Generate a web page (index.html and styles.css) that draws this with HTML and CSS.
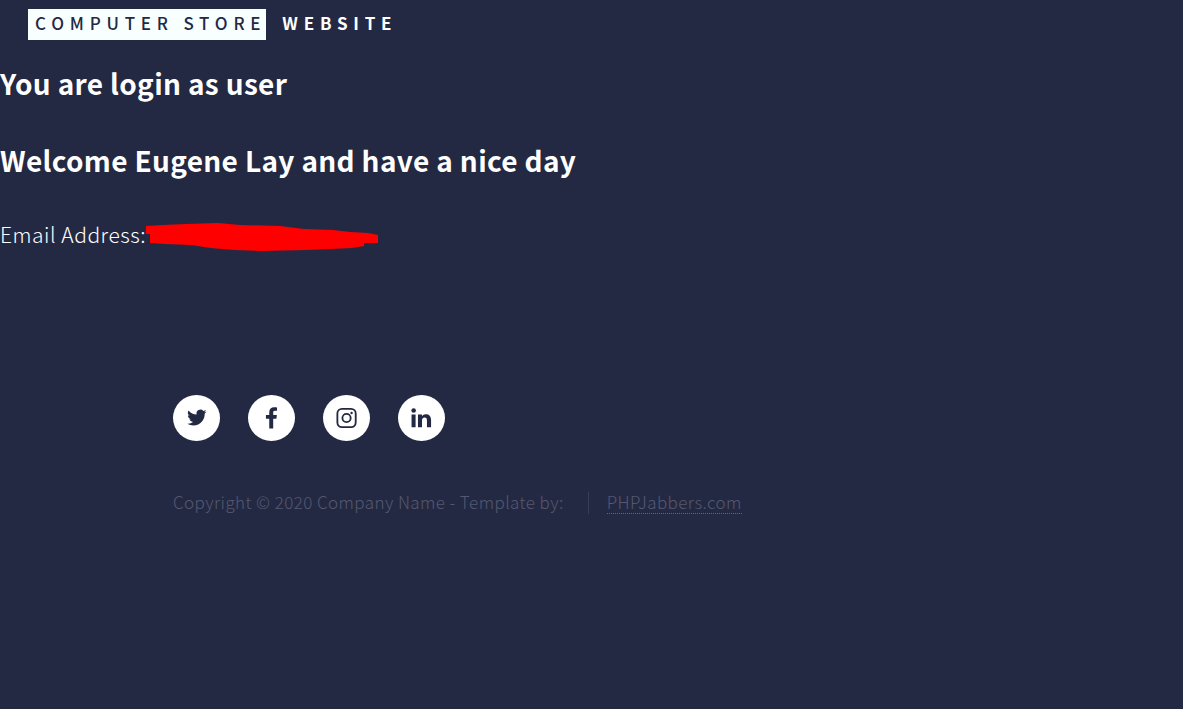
FILE: index.html
```
<!DOCTYPE html>
<html lang="en">
<head>
<meta charset="utf-8">
<meta name="viewport" content="width=device-width, initial-scale=1">
<title>Computer Store Website</title>
<link rel="stylesheet" href="styles.css">
</head>
<body>
<header class="header">
  <a class="logo" href="#"><strong class="logo-mark">Computer Store</strong><span class="logo-text">Website</span></a>
</header>
<main class="main">
  <h2 class="title">You are login as user</h2>
  <h2 class="title">Welcome Eugene Lay and have a nice day</h2>
  <p class="email">Email Address:
    <svg class="scribble" viewBox="0 0 233 29" aria-hidden="true"><path fill="#f00" d="M0 3 17 2 40 1 72 0 94 2 134 3 158 6 187 7 204 9 222 10 232 12V20H218V23L206 25 185 26 160 27 115 28 88 27 65 25 45 22 20 21 4 20V11H0z"/></svg>
  </p>
</main>
<footer class="footer">
  <ul class="icons">
    <li><a class="icon" href="#" aria-label="Twitter"><svg viewBox="0 0 24 24"><path d="M22.200 5a8.700 8.700 0 0 1-2.400.7 4.300 4.300 0 0 0 1.900-2.400 8.600 8.600 0 0 1-2.700 1A4.300 4.300 0 0 0 11.600 8.200 12.200 12.200 0 0 1 2.800 3.700a4.300 4.300 0 0 0 1.300 5.800 4.300 4.300 0 0 1-2-.5v.1a4.300 4.300 0 0 0 3.500 4.200 4.300 4.300 0 0 1-1.900.1 4.300 4.300 0 0 0 4 3A8.700 8.700 0 0 1 1.400 18.200a12.200 12.200 0 0 0 6.700 1.900c7.900 0 12.300-6.600 12.300-12.200l-.1-.6a8.800 8.800 0 0 0 1.900-2.300z"/></svg></a></li>
    <li><a class="icon" href="#" aria-label="Facebook"><svg viewBox="0 0 24 24"><path d="M17.500.5v3.600h-2.200c-1.700 0-2 .8-2 2V8.700h4l-.5 4.100h-3.500V23.500H9V12.800H5.400V8.700H9V5.600C9 2.100 11.200.2 14.300.2c1.500 0 2.800.1 3.200.3z"/></svg></a></li>
    <li><a class="icon" href="#" aria-label="Instagram"><svg viewBox="0 0 24 24"><g fill="none" stroke="#242943" stroke-width="2"><rect x="1.500" y="2" width="20" height="20" rx="5"/><circle cx="11.500" cy="12" r="4.500"/></g><circle cx="17" cy="6.500" r="1.300"/></svg></a></li>
    <li><a class="icon" href="#" aria-label="LinkedIn"><svg viewBox="0 0 24 24"><circle cx="2.900" cy="3.800" r="2.500"/><path d="M.6 8.200H5V22H.6zM7.600 8.200H12v2c.8-1.300 2.100-2.300 4.200-2.300 3.300 0 5.700 2.100 5.700 6.400V22h-4.500v-7.300c0-1.900-.7-3.200-2.400-3.200-1.900 0-3 1.300-3 3.200V22H7.600z"/></svg></a></li>
  </ul>
  <ul class="copyright">
    <li>Copyright © 2020 Company Name - Template by:</li>
    <li><a class="credit" href="#">PHPJabbers.com</a></li>
  </ul>
</footer>
</body>
</html>
```
FILE: styles.css
```
* { box-sizing: border-box; }

body {
  margin: 0;
  background: #242943;
  color: #fff;
  font-family: "Noto Sans CJK SC", "Noto Sans", sans-serif;
  font-weight: 300;
  font-size: 21px;
  line-height: 36px;
  letter-spacing: 0.025em;
}

.header {
  display: flex;
  padding: 9px 28px 0;
}

.logo {
  display: flex;
  gap: 8px;
  color: #fff;
  font-size: 17px;
  font-weight: 500;
  line-height: 28px;
  letter-spacing: 0.34em;
  text-transform: uppercase;
  text-decoration: none;
}

.logo-mark {
  padding: 0 0 3px 7px;
  background: #f8ffff;
  color: #242943;
  font-weight: 500;
}

.logo-text { padding-left: 8px; font-weight: 700; }

.main { padding-top: 22px; }

.title {
  margin: 0 0 35px;
  font-size: 28px;
  font-weight: 700;
  line-height: 42px;
  letter-spacing: 0.012em;
}

.email { display: flex; margin: 0; }

.scribble {
  width: 233px;
  height: 29px;
  margin-top: 7px;
}

.footer { padding: 143px 173px 0; }

.icons,
.copyright {
  display: flex;
  flex-wrap: wrap;
  margin: 0;
  padding: 0;
  list-style: none;
}

.icons { gap: 28px; }

.icon {
  display: flex;
  align-items: center;
  justify-content: center;
  width: 47px;
  height: 46px;
  border-radius: 50%;
  background: #fff;
}

.icon svg {
  width: 22px;
  height: 22px;
  fill: #242943;
}

.copyright {
  align-items: flex-start;
  margin-top: 51px;
  color: #545870;
  font-size: 17px;
  line-height: 20px;
  letter-spacing: 0.025em;
}

.copyright li + li {
  margin-left: 24px;
  padding-left: 18px;
  border-left: 1px solid #393e56;
}

.credit {
  display: block;
  padding-bottom: 1px;
  border-bottom: 1px dotted #62667a;
  color: inherit;
  text-decoration: none;
}
```
